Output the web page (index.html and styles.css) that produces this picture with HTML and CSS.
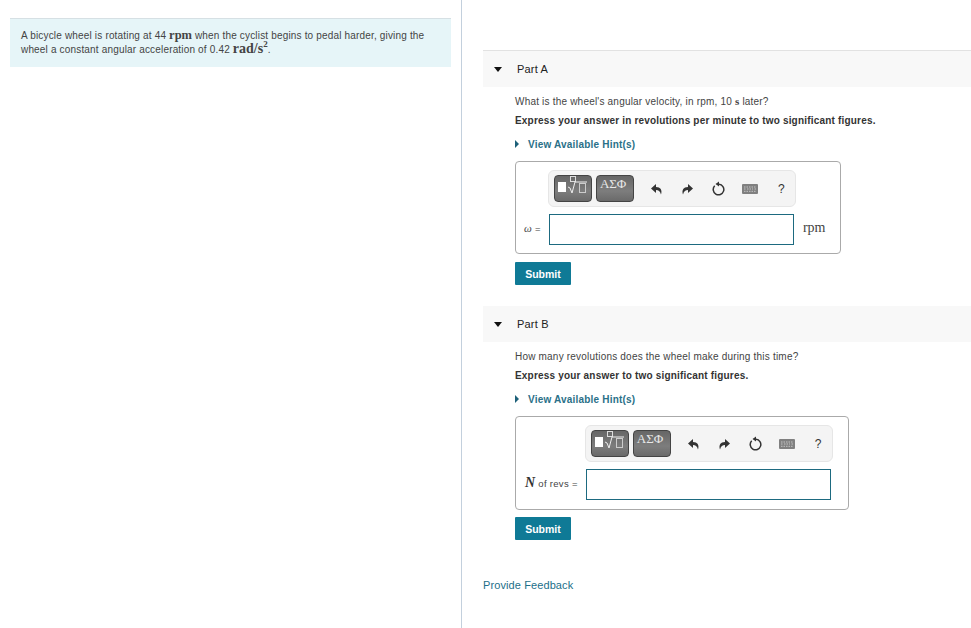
FILE: index.html
```html
<!DOCTYPE html>
<html lang="en">
<head>
    <meta charset="UTF-8">
    <meta name="viewport" content="width=device-width, initial-scale=1.0">
    <title>Bicycle wheel</title>
    <link rel="stylesheet" href="styles.css">
</head>
<body>
    <svg class="icon-defs" width="0" height="0">
        <symbol id="icon-template" viewBox="0 0 38 27">
            <rect x="4" y="7" width="8" height="10" fill="#fff"/>
            <rect x="16.500" y="1.500" width="5" height="5" fill="none" stroke="#ddd"/>
            <path d="M14 12l2 1 2 5 3-11h12" fill="none" stroke="#eee" stroke-width="1"/>
            <rect x="25.500" y="8.500" width="6" height="9" fill="none" stroke="#ccc"/>
        </symbol>
        <symbol id="icon-undo" viewBox="0 0 14 14">
            <path d="M6 2L1 6.500 6 11V8c2.500 0 4 1 5 4.500C12.500 8 10.500 5 6 5z" fill="#333"/>
        </symbol>
        <symbol id="icon-redo" viewBox="0 0 14 14">
            <path d="M8 2l5 4.500L8 11V8c-2.500 0-4 1-5 4.500C1.500 8 3.500 5 8 5z" fill="#333"/>
        </symbol>
        <symbol id="icon-reset" viewBox="0 0 15 15">
            <path d="M3.700 4.800a5.300 5.300 0 1 0 4.300-1.600" fill="none" stroke="#333" stroke-width="1.500"/>
            <path d="M8 .5L4.500 3 8 5.500z" fill="#333"/>
        </symbol>
        <symbol id="icon-keyboard" viewBox="0 0 16 10">
            <rect width="16" height="10" rx="1" fill="#808080"/>
            <path d="M2 3h12M2 5h1.500M5 5h6M12.500 5H14M2 7.300h12" stroke="#c4c4c4" stroke-width="1" stroke-dasharray="1.500 1"/>
        </symbol>
    </svg>

    <div class="page">
        <div class="intro-col">
            <div class="intro">
                A bicycle wheel is rotating at 44 <span class="math">rpm</span> when the cyclist begins to pedal harder, giving the wheel a constant angular acceleration of 0.42 <span class="math math-large">rad/s<sup>2</sup></span>.
            </div>
        </div>

        <div class="parts-col">
            <section class="part part-first">
                <div class="part-head"><span class="caret"></span>Part A</div>
                <div class="part-body">
                    <p class="question">What is the wheel's angular velocity, in rpm, 10 <span class="math-small">s</span> later?</p>
                    <p class="instruction">Express your answer in revolutions per minute to two significant figures.</p>
                    <a class="hints"><span class="hint-caret"></span>View Available Hint(s)</a>
                    <div class="answer-box">
                        <div class="toolbar">
                            <span class="tool-btn"><svg width="38" height="27"><use href="#icon-template"/></svg></span>
                            <span class="tool-btn tool-greek">ΑΣΦ</span>
                            <svg class="tool-icon" width="14" height="14"><use href="#icon-undo"/></svg>
                            <svg class="tool-icon" width="14" height="14"><use href="#icon-redo"/></svg>
                            <svg class="tool-icon tool-reset" width="15" height="15"><use href="#icon-reset"/></svg>
                            <svg class="tool-icon" width="16" height="10"><use href="#icon-keyboard"/></svg>
                            <span class="tool-help">?</span>
                        </div>
                        <label class="answer-label"><i class="omega">ω</i> =</label>
                        <input class="answer-input" type="text">
                        <span class="answer-unit">rpm</span>
                    </div>
                    <button class="submit">Submit</button>
                </div>
            </section>

            <section class="part">
                <div class="part-head"><span class="caret"></span>Part B</div>
                <div class="part-body">
                    <p class="question">How many revolutions does the wheel make during this time?</p>
                    <p class="instruction">Express your answer to two significant figures.</p>
                    <a class="hints"><span class="hint-caret"></span>View Available Hint(s)</a>
                    <div class="answer-box answer-box-nounit">
                        <div class="toolbar">
                            <span class="tool-btn"><svg width="38" height="27"><use href="#icon-template"/></svg></span>
                            <span class="tool-btn tool-greek">ΑΣΦ</span>
                            <svg class="tool-icon" width="14" height="14"><use href="#icon-undo"/></svg>
                            <svg class="tool-icon" width="14" height="14"><use href="#icon-redo"/></svg>
                            <svg class="tool-icon tool-reset" width="15" height="15"><use href="#icon-reset"/></svg>
                            <svg class="tool-icon" width="16" height="10"><use href="#icon-keyboard"/></svg>
                            <span class="tool-help">?</span>
                        </div>
                        <label class="answer-label"><i class="var-n">N</i> of revs =</label>
                        <input class="answer-input" type="text">
                    </div>
                    <button class="submit">Submit</button>
                </div>
            </section>

            <a class="feedback">Provide Feedback</a>
        </div>
    </div>
</body>
</html>
```

FILE: styles.css
```css
body, html {
    height: 100%;
    margin: 0;
    color: #444;
    background-color: white;
    font-family: "Liberation Sans", Arial, sans-serif;
    font-size: 10px;
    overflow: hidden;
}

.icon-defs {
    position: absolute;
}

.page {
    display: flex;
    height: 100vh;
}

.intro-col {
    width: 462px;
    flex: none;
    box-sizing: border-box;
    padding: 18px 10px 0;
    border-right: 1px solid #c3d0dd;
}

.intro {
    height: 38px;
    padding: 10px 11px 0;
    background-color: #e6f5f8;
    border-top: 1px solid #d6e0e4;
    line-height: 14px;
    letter-spacing: 0.17px;
}

.math {
    font-family: "Liberation Serif", serif;
    font-size: 12.500px;
    font-weight: bold;
    line-height: 0;
    letter-spacing: 0;
}

.math-large {
    font-size: 14px;
}

.math sup {
    font-size: 9px;
    line-height: 0;
}

.math-small {
    font-family: "Liberation Serif", serif;
    font-size: 11px;
    font-weight: bold;
    line-height: 0;
}

.parts-col {
    flex: 1;
    min-width: 0;
    padding: 50px 0 0 21px;
}

.part-first {
    border-top: 1px solid #e2e2e2;
}

.part-head {
    display: flex;
    align-items: center;
    height: 36px;
    background-color: #f8f8f8;
    color: #222;
    font-size: 11px;
    letter-spacing: 0.2px;
}

.caret {
    width: 0;
    height: 0;
    margin: 0 15px 0 11px;
    border-left: 4.500px solid transparent;
    border-right: 4.500px solid transparent;
    border-top: 5px solid #111;
}

.part-body {
    padding: 8px 0 0 32px;
    height: 211px;
}

.question {
    margin: 0;
    height: 19px;
    line-height: 14px;
    letter-spacing: 0.2px;
}

.instruction {
    margin: 0;
    height: 23px;
    line-height: 14px;
    color: #333;
    font-weight: bold;
    letter-spacing: 0.19px;
}

.hints {
    display: flex;
    align-items: center;
    height: 14px;
    color: #2a7088;
    font-weight: bold;
    letter-spacing: 0.2px;
}

.hint-caret {
    width: 0;
    height: 0;
    margin-right: 9px;
    border-top: 4px solid transparent;
    border-bottom: 4px solid transparent;
    border-left: 4px solid #1d6079;
}

.answer-box {
    display: inline-grid;
    grid-template-columns: auto 245px auto;
    column-gap: 8px;
    row-gap: 7px;
    align-items: center;
    margin-top: 10px;
    padding: 8px 15px 8px 8px;
    border: 1px solid #aaa;
    border-radius: 4px;
    vertical-align: top;
}

.answer-box-nounit {
    padding-right: 9px;
    padding-bottom: 9px;
}

.answer-box-nounit + .submit {
    margin-top: 7px;
}

.toolbar {
    grid-column: 2;
    display: flex;
    align-items: center;
    box-sizing: border-box;
    height: 37px;
    margin: 0 -2px 0 -1px;
    padding: 0 5px;
    background-color: #f4f4f4;
    border: 1px solid #e6e6e6;
    border-radius: 6px;
}

.tool-btn {
    display: flex;
    flex: none;
    width: 38px;
    height: 27px;
    margin-right: 4px;
    box-sizing: border-box;
    background: linear-gradient(#666, #7d7d7d 60%, #6a6a6a);
    border: 1px solid #444;
    border-radius: 4px;
    overflow: hidden;
}

.tool-btn svg {
    margin: -1px;
    flex: none;
}

.tool-greek {
    color: #e8e8e8;
    font-family: "Liberation Serif", serif;
    font-size: 13px;
    line-height: 14px;
    padding: 1px 0 0 3px;
}

.tool-icon {
    flex: none;
    margin-left: 16px;
}

.tool-btn + .tool-icon {
    margin-left: 12px;
}

.tool-icon.tool-reset {
    margin-left: 17px;
}

.tool-help {
    margin-left: 20px;
    color: #333;
    font-size: 12px;
}

.answer-label {
    grid-column: 1;
    padding-bottom: 3px;
    font-size: 9.500px;
    letter-spacing: 0.3px;
    white-space: nowrap;
}

.omega {
    font-family: "Liberation Serif", serif;
    font-size: 11px;
}

.var-n {
    margin-left: 1px;
    font-family: "Liberation Serif", serif;
    font-size: 14px;
    font-weight: bold;
    color: #333;
}

.answer-input {
    height: 31px;
    width: 245px;
    box-sizing: border-box;
    padding: 0 5px;
    border: 1px solid #1d6a80;
    outline: none;
}

.answer-unit {
    margin-left: 1px;
    padding-bottom: 3px;
    font-family: "Liberation Serif", serif;
    font-size: 14px;
    color: #444;
}

.submit {
    display: block;
    width: 56px;
    height: 23px;
    margin-top: 8px;
    padding: 0;
    background-color: #0f7a96;
    border: none;
    border-radius: 1px;
    color: white;
    font-family: "Liberation Sans", Arial, sans-serif;
    font-size: 10.500px;
    font-weight: bold;
}

.feedback {
    display: block;
    color: #1d6f89;
    font-size: 11px;
    letter-spacing: 0.1px;
    margin-top: 18px;
}
```
